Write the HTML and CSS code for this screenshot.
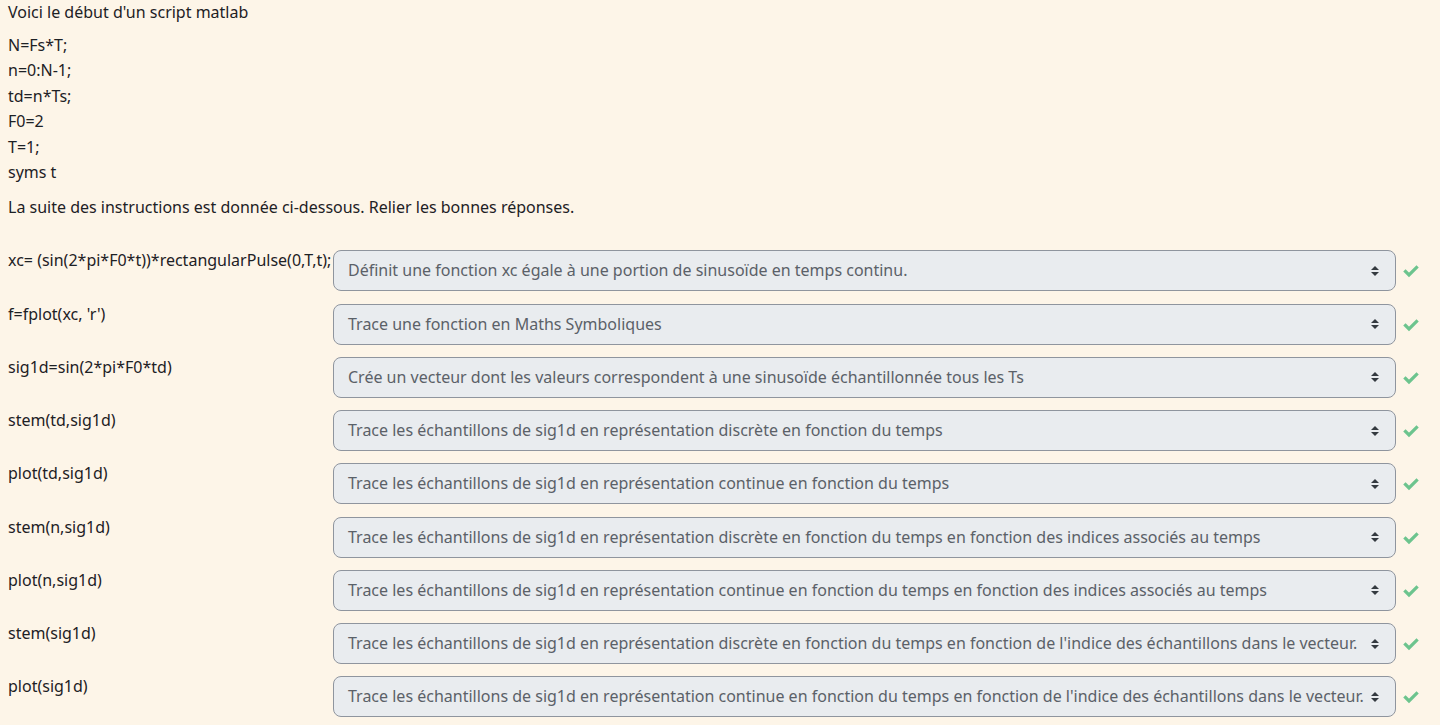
FILE: index.html
```html
<!DOCTYPE html>
<html lang="fr">
<head>
<meta charset="utf-8">
<link rel="stylesheet" href="styles.css">
</head>
<body>
<div class="question">
  <p class="intro">Voici le début d'un script matlab</p>
  <div class="code">
    <div>N=Fs*T;</div>
    <div>n=0:N-1;</div>
    <div>td=n*Ts;</div>
    <div>F0=2</div>
    <div>T=1;</div>
    <div>syms t</div>
  </div>
  <p class="instr">La suite des instructions est donnée ci-dessous. Relier les bonnes réponses.</p>
  <div class="answers">
    <div class="row"><div class="label">xc= (sin(2*pi*F0*t))*rectangularPulse(0,T,t);</div><div class="select">Définit une fonction xc égale à une portion de sinusoïde en temps continu.</div><span class="check"></span></div>
    <div class="row"><div class="label">f=fplot(xc, 'r')</div><div class="select">Trace une fonction en Maths Symboliques</div><span class="check"></span></div>
    <div class="row"><div class="label">sig1d=sin(2*pi*F0*td)</div><div class="select">Crée un vecteur dont les valeurs correspondent à une sinusoïde échantillonnée tous les Ts</div><span class="check"></span></div>
    <div class="row"><div class="label">stem(td,sig1d)</div><div class="select">Trace les échantillons de sig1d en représentation discrète en fonction du temps</div><span class="check"></span></div>
    <div class="row"><div class="label">plot(td,sig1d)</div><div class="select">Trace les échantillons de sig1d en représentation continue en fonction du temps</div><span class="check"></span></div>
    <div class="row"><div class="label">stem(n,sig1d)</div><div class="select">Trace les échantillons de sig1d en représentation discrète en fonction du temps en fonction des indices associés au temps</div><span class="check"></span></div>
    <div class="row"><div class="label">plot(n,sig1d)</div><div class="select">Trace les échantillons de sig1d en représentation continue en fonction du temps en fonction des indices associés au temps</div><span class="check"></span></div>
    <div class="row"><div class="label">stem(sig1d)</div><div class="select">Trace les échantillons de sig1d en représentation discrète en fonction du temps en fonction de l'indice des échantillons dans le vecteur.</div><span class="check"></span></div>
    <div class="row"><div class="label">plot(sig1d)</div><div class="select">Trace les échantillons de sig1d en représentation continue en fonction du temps en fonction de l'indice des échantillons dans le vecteur.</div><span class="check"></span></div>
  </div>
</div>
</body>
</html>
```
FILE: styles.css
```css
html, body {
  margin: 0;
  padding: 0;
  background: #fdf5e8;
}
body {
  font-family: "Noto Sans", "Open Sans", sans-serif;
  font-size: 16px;
  color: #1d2125;
}
.question {
  padding: 1px 8px 0 8px;
}
.intro {
  margin: 0;
  line-height: 22px;
}
.code {
  margin-top: 10px;
  line-height: 25.4px;
}
.instr {
  margin: 11px 0 0 0;
  line-height: 22px;
}
.answers {
  margin-top: 32px;
}
.row {
  display: flex;
  align-items: flex-start;
  height: 53.25px;
}
.label {
  width: 325px;
  line-height: 20px;
  white-space: nowrap;
}
.select {
  box-sizing: border-box;
  width: 1063px;
  height: 41px;
  border: 1px solid #8f959e;
  border-radius: 8px;
  background-color: #e9ecef;
  background-image: url("data:image/svg+xml,%3csvg xmlns='http://www.w3.org/2000/svg' viewBox='0 0 4 5'%3e%3cpath fill='%23343a40' d='M2 0L0 2h4zm0 5L0 3h4z'/%3e%3c/svg%3e");
  background-repeat: no-repeat;
  background-position: right 16px center;
  background-size: 8px 10px;
  color: #5b6168;
  padding: 0 28px 0 14px;
  line-height: 39px;
  white-space: nowrap;
  overflow: hidden;
}
.check {
  width: 16px;
  height: 16px;
  margin: 13px 0 0 7px;
  background-image: url("data:image/svg+xml,%3csvg xmlns='http://www.w3.org/2000/svg' viewBox='0 0 16 16'%3e%3cpath fill='none' stroke='%236cc48e' stroke-width='3.2' stroke-linecap='square' d='M2.5 8.5l3.5 3.5l7.5-7.5'/%3e%3c/svg%3e");
  background-repeat: no-repeat;
}
```
